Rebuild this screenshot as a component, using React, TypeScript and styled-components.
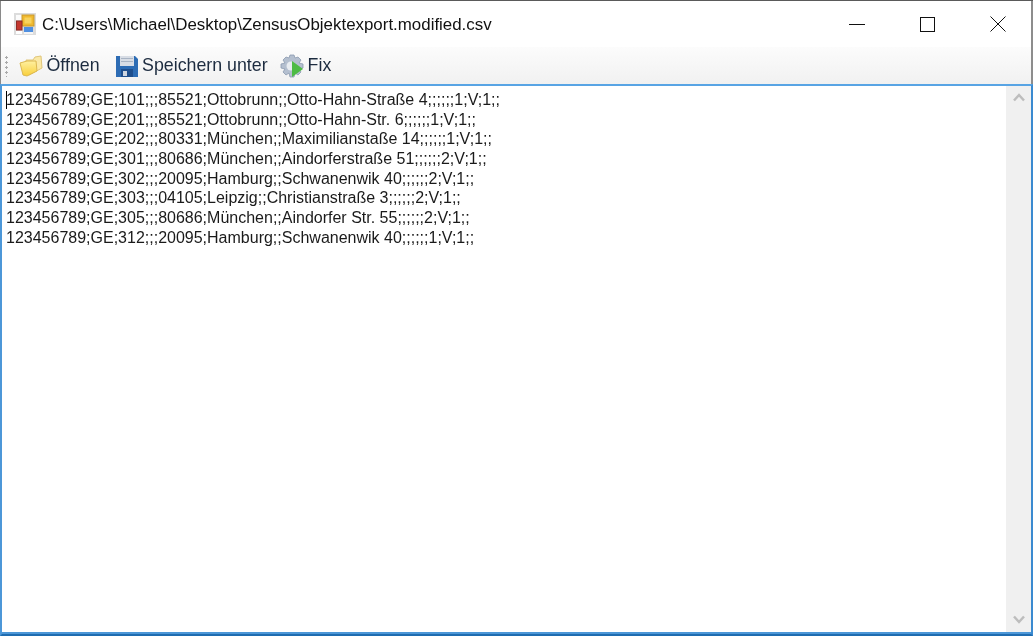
import React from "react";
import styled, { createGlobalStyle } from "styled-components";

const Global = createGlobalStyle`
  html, body { margin: 0; padding: 0; background: #fff; }
  body { width: 1034px; height: 636px; overflow: hidden; font-family: "Liberation Sans", Arial, sans-serif; }
`;

const Window = styled.div`
  width: 1033px;
  height: 636px;
  box-sizing: border-box;
  display: flex;
  flex-direction: column;
  background: #fff;
  border-top: 1px solid #5a5a5a;
  filter: blur(0.35px);
`;

const Chrome = styled.div`
  flex: none;
  border-left: 1px solid #8a8a8a;
  border-right: 2px solid #8d8d8d;
`;

const TitleBar = styled.div`
  height: 46px;
  display: flex;
  align-items: center;
  padding-left: 13px;
  background: #fff;
`;

const AppIcon = styled.svg`
  width: 22px;
  height: 22px;
  flex: none;
  margin-right: 6px;
`;

const Title = styled.div`
  flex: 1;
  font-size: 16.9px;
  color: #111;
  white-space: nowrap;
  margin-top: 1px;
`;

const WindowButton = styled.div<{ $shift?: number }>`
  width: 70px;
  height: 46px;
  flex: none;
  display: flex;
  align-items: center;
  justify-content: center;
  padding-left: ${(p) => p.$shift ?? 0}px;
  box-sizing: border-box;
  position: relative;
  left: 1px;
`;

const Toolbar = styled.div`
  height: 37px;
  display: flex;
  align-items: center;
  padding-left: 4px;
  background: linear-gradient(#fcfcfc, #f1f1f1);
`;

const Grip = styled.div`
  width: 3px;
  height: 22px;
  margin-right: 11px;
  background-image: radial-gradient(circle, #a9a9a9 1.2px, transparent 1.4px);
  background-size: 3px 5px;
`;

const ToolButton = styled.div<{ $gap: number }>`
  display: flex;
  align-items: center;
  margin-right: ${(p) => p.$gap}px;
  font-size: 17.8px;
  color: #1c2b3f;
  white-space: nowrap;
`;

const ToolIcon = styled.svg`
  width: 24px;
  height: 24px;
  flex: none;
  margin-right: 3.5px;
`;

const Editor = styled.div`
  flex: 1;
  min-height: 0;
  display: flex;
  border-left: 2px solid #4c97d8;
  border-right: 2px solid #3b8ad0;
  border-top: 2px solid #58a4e4;
  border-bottom: 2px solid #1f6cb0;
  box-shadow: inset 0 -2px 0 #4c97d8;
  background: #fff;
`;

const TextArea = styled.div`
  flex: 1;
  padding: 4px 0 0 4px;
  position: relative;
`;

const Line = styled.div`
  font-size: 16px;
  line-height: 19.7px;
  height: 19.7px;
  color: #1a1a1a;
  white-space: pre;
`;

const Caret = styled.div`
  position: absolute;
  left: 4px;
  top: 5px;
  width: 1px;
  height: 18px;
  background: #000;
`;

const ScrollBar = styled.div`
  width: 25px;
  flex: none;
  display: flex;
  flex-direction: column;
  justify-content: space-between;
  align-items: center;
  background: #f0f0f0;
  padding: 7px 0 8px;
  margin-bottom: 2px;
  box-sizing: border-box;
`;

const Arrow = styled.svg`
  width: 12px;
  height: 9px;
`;

const lines = [
  "123456789;GE;101;;;85521;Ottobrunn;;Otto-Hahn-Straße 4;;;;;;1;V;1;;",
  "123456789;GE;201;;;85521;Ottobrunn;;Otto-Hahn-Str. 6;;;;;;1;V;1;;",
  "123456789;GE;202;;;80331;München;;Maximilianstaße 14;;;;;;1;V;1;;",
  "123456789;GE;301;;;80686;München;;Aindorferstraße 51;;;;;;2;V;1;;",
  "123456789;GE;302;;;20095;Hamburg;;Schwanenwik 40;;;;;;2;V;1;;",
  "123456789;GE;303;;;04105;Leipzig;;Christianstraße 3;;;;;;2;V;1;;",
  "123456789;GE;305;;;80686;München;;Aindorfer Str. 55;;;;;;2;V;1;;",
  "123456789;GE;312;;;20095;Hamburg;;Schwanenwik 40;;;;;;1;V;1;;",
];

export default function App() {
  return (
    <Window>
      <Global />
      <Chrome>
        <TitleBar>
          <AppIcon viewBox="0 0 22 22">
            <rect x="0" y="0" width="22" height="22" fill="#dcdcdc" />
            <rect x="2" y="2" width="6" height="5" fill="#fbfbfb" />
            <rect x="8" y="2" width="12" height="11" fill="#f0b92e" stroke="#c99a2e" strokeWidth="1" />
            <rect x="10.5" y="4.5" width="7" height="6" fill="#f8d35e" />
            <rect x="2.5" y="8" width="5.5" height="9" fill="#c4382f" stroke="#8f2c26" strokeWidth="1" />
            <rect x="10" y="14" width="9" height="5" fill="#4f8fe0" />
            <rect x="2" y="18" width="6" height="3" fill="#fff" />
            <rect x="10" y="19" width="9" height="2" fill="#f4f4f4" />
          </AppIcon>
          <Title>C:\Users\Michael\Desktop\ZensusObjektexport.modified.csv</Title>
          <WindowButton>
            <svg width="16" height="1" viewBox="0 0 16 1">
              <rect width="16" height="1" fill="#111" />
            </svg>
          </WindowButton>
          <WindowButton>
            <svg width="15" height="15" viewBox="0 0 15 15">
              <rect x="0.5" y="0.5" width="14" height="14" fill="none" stroke="#111" />
            </svg>
          </WindowButton>
          <WindowButton $shift={2}>
            <svg width="16" height="16" viewBox="0 0 16 16">
              <path d="M0.5 0.5L15.5 15.5M15.5 0.5L0.5 15.5" stroke="#111" strokeWidth="1" fill="none" />
            </svg>
          </WindowButton>
        </TitleBar>
        <Toolbar>
          <Grip />
          <ToolButton $gap={15}>
            <ToolIcon viewBox="0 0 24 24">
              <defs>
                <linearGradient id="folder" x1="0" y1="0" x2="0" y2="1">
                  <stop offset="0" stopColor="#fff0a0" />
                  <stop offset="1" stopColor="#f8cf3a" />
                </linearGradient>
              </defs>
              <path d="M7 6 L14 6 L16 3 L22 2 L23 14 L10 21 Z" fill="#fbe9a6" stroke="#e0c67a" strokeWidth="1" />
              <path d="M1 9 L8 7 L17 7 L18 17 L8 22 L4 21 Z" fill="url(#folder)" stroke="#dcb850" strokeWidth="1" />
            </ToolIcon>
            Öffnen
          </ToolButton>
          <ToolButton $gap={12.5}>
            <ToolIcon viewBox="0 0 24 24">
              <path d="M1 2 H20 L23 5 V23 H1 Z" fill="#2d6cb4" />
              <rect x="5" y="2" width="14" height="10" fill="#d8dde5" />
              <rect x="6" y="4" width="12" height="1" fill="#a9b4c4" />
              <rect x="6" y="7" width="12" height="1" fill="#a9b4c4" />
              <rect x="6" y="15" width="12" height="8" fill="#1f4f8d" />
              <rect x="8" y="17" width="4" height="5" fill="#cfd6e0" />
            </ToolIcon>
            Speichern unter
          </ToolButton>
          <ToolButton $gap={0}>
            <ToolIcon viewBox="0 0 24 24">
              <path d="M10 1 H14 L15 4 L18 3 L21 6 L19 9 L23 10 V14 L19 15 L21 18 L18 21 L15 19 L14 23 H10 L9 19 L6 21 L3 18 L5 15 L1 14 V10 L5 9 L3 6 L6 3 L9 4 Z" fill="#b4bfcf" stroke="#8c9ab0" strokeWidth="0.8" />
              <circle cx="11" cy="12" r="4.5" fill="#e8ecf1" />
              <path d="M12 7 L23 15 L12 23 Z" fill="#4dbb44" />
            </ToolIcon>
            Fix
          </ToolButton>
        </Toolbar>
      </Chrome>
      <Editor>
        <TextArea>
          <Caret />
          {lines.map((l) => (
            <Line key={l}>{l}</Line>
          ))}
        </TextArea>
        <ScrollBar>
          <Arrow viewBox="0 0 12 9">
            <path d="M1 7.5 L6 2 L11 7.5" stroke="#bdbdbd" strokeWidth="2.5" fill="none" />
          </Arrow>
          <Arrow viewBox="0 0 12 9">
            <path d="M1 1.5 L6 7 L11 1.5" stroke="#bdbdbd" strokeWidth="2.5" fill="none" />
          </Arrow>
        </ScrollBar>
      </Editor>
    </Window>
  );
}
